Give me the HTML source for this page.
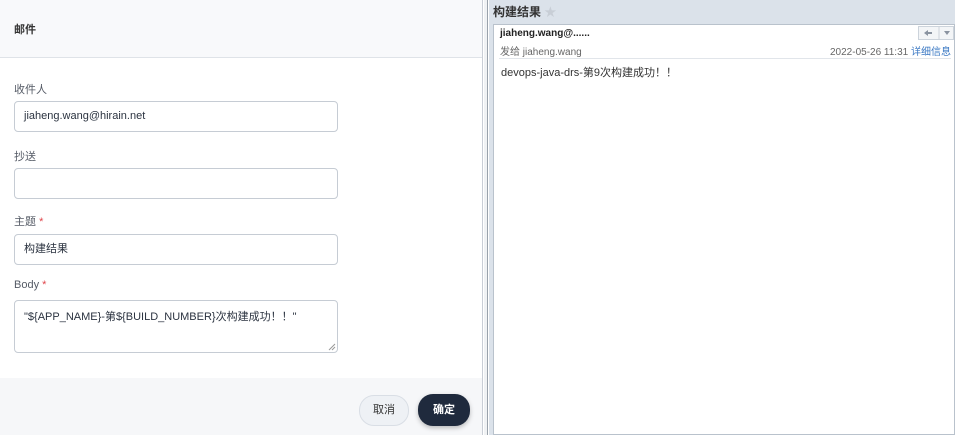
<!DOCTYPE html>
<html><head><meta charset="utf-8"><style>
*{box-sizing:border-box;margin:0;padding:0}
body{width:955px;height:435px;overflow:hidden;background:#fff;font-family:"Liberation Sans","Noto Sans CJK SC",sans-serif;position:relative}
.abs{position:absolute;white-space:nowrap}
.left{left:0;top:0;width:483px;height:435px;background:#fff;border-right:1px solid #c9ced6}
.hdr{left:0;top:0;width:482px;height:58px;background:#f8f9fb;border-bottom:1px solid #dfe3e8}
.lbl{font-size:11px;color:#555b66}
.req{color:#e0454b}
.inp{left:14px;width:324px;height:31px;border:1px solid #c6ccd4;border-radius:4px;background:#fff;font-size:11px;color:#2b3340;padding:0 9px;line-height:29px}
.foot{left:0;top:378px;width:482px;height:57px;background:#f6f7f9}
.btn{border-radius:15px;font-size:11px;text-align:center;line-height:30px;height:31px}
</style></head><body>
<div class="abs left"></div>
<div class="abs hdr"><div class="abs" style="left:14px;top:21px;font-size:11px;font-weight:bold;color:#333">邮件</div></div>
<div class="abs lbl" style="left:14px;top:81px">收件人</div>
<div class="abs inp" style="top:101px">jiaheng.wang@hirain.net</div>
<div class="abs lbl" style="left:14px;top:148px">抄送</div>
<div class="abs inp" style="top:168px"></div>
<div class="abs lbl" style="left:14px;top:213px">主题 <span class="req">*</span></div>
<div class="abs inp" style="top:234px">构建结果</div>
<div class="abs lbl" style="left:14px;top:279px">Body <span class="req">*</span></div>
<div class="abs inp" style="top:300px;height:53px;line-height:16px;padding-top:8px">"${APP_NAME}-第${BUILD_NUMBER}次构建成功！！"</div>
<svg class="abs" style="left:328px;top:343px" width="8" height="8"><path d="M1 7L7 1M4 7L7 4" stroke="#999" stroke-width="1"/></svg>
<div class="abs foot"></div>
<div class="abs btn" style="left:359px;top:395px;width:50px;background:#eef1f5;border:1px solid #d9dee5;color:#333;line-height:29px">取消</div>
<div class="abs btn" style="left:418px;top:394px;width:52px;height:32px;line-height:32px;background:#1f2a3d;color:#fff;font-weight:bold;box-shadow:0 2px 5px rgba(0,0,0,.25)">确定</div>
<div class="abs" style="left:484px;top:0;width:4px;height:435px;background:#f0f2f4;border-right:1px solid #9aa2ab"></div>
<div class="abs" style="left:489px;top:0;width:466px;height:435px;background:#dbe2ea"></div>
<div class="abs" style="left:493px;top:3px;font-size:12px;font-weight:bold;color:#333">构建结果 <span style="color:#c8ced6">★</span></div>
<div class="abs" style="left:493px;top:24px;width:462px;height:411px;background:#fff;border:1px solid #b9c2cc"></div>
<div class="abs" style="left:918px;top:26px;width:36px;height:14px;border:1px solid #ccd3db;background:#f3f5f7"></div>
<svg class="abs" style="left:918px;top:26px" width="36" height="14"><path d="M6 7L10 4V6H14V8H10V10Z" fill="#8a93a0"/><line x1="21" y1="1" x2="21" y2="13" stroke="#ccd3db"/><path d="M26 5H32L29 9Z" fill="#8a93a0"/></svg>
<div class="abs" style="left:500px;top:28px;font-size:10px;font-weight:bold;color:#222">jiaheng.wang@......</div>
<div class="abs" style="left:500px;top:43px;font-size:10px;color:#666">发给 jiaheng.wang</div>
<div class="abs" style="right:4px;top:43px;font-size:10px;color:#666">2022-05-26 11:31 <span style="color:#3a78c3">详细信息</span></div>
<div class="abs" style="left:499px;top:58px;width:452px;height:1px;background:#e1e5ea"></div>
<div class="abs" style="left:501px;top:64px;font-size:11px;color:#333">devops-java-drs-第9次构建成功！！</div>
</body></html>
